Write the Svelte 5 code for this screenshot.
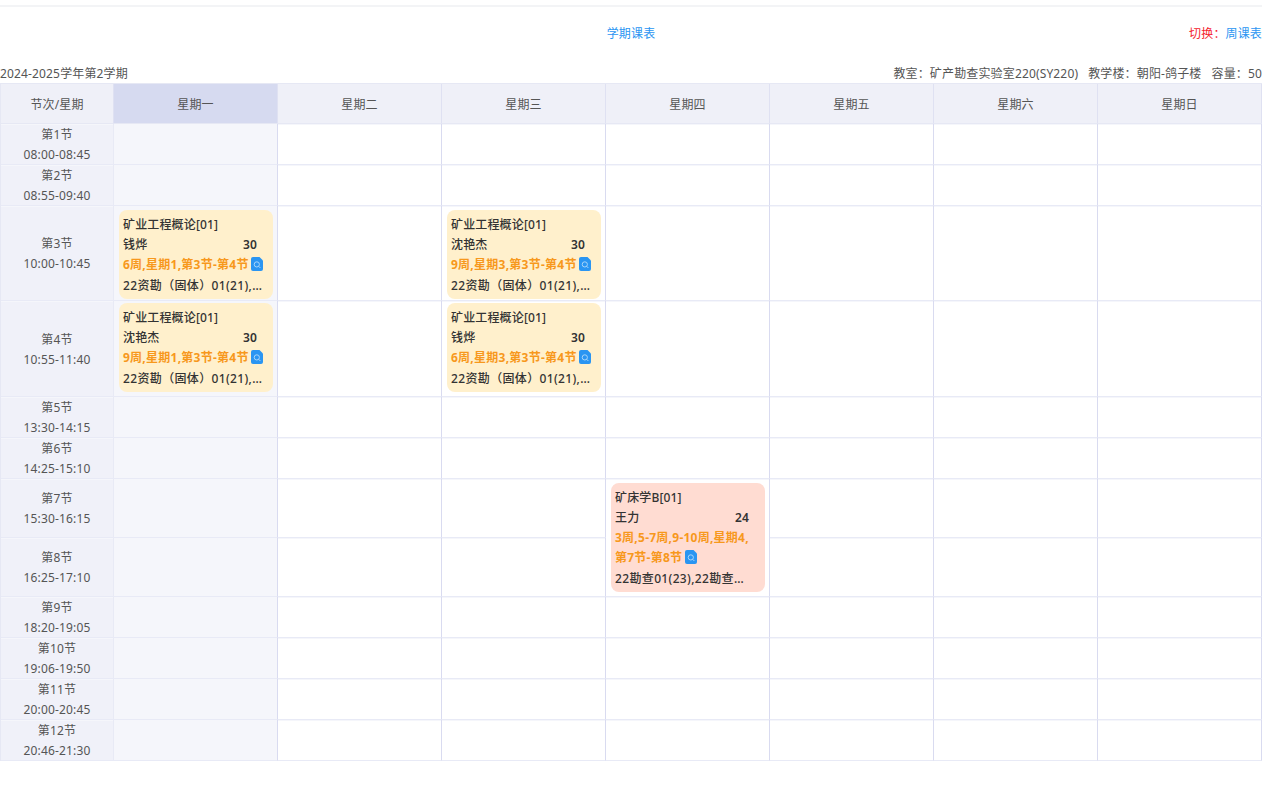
<script>
  const days = ['星期一', '星期二', '星期三', '星期四', '星期五', '星期六', '星期日'];

  const periods = [
    { name: '第1节', time: '08:00-08:45', h: 41 },
    { name: '第2节', time: '08:55-09:40', h: 41 },
    { name: '第3节', time: '10:00-10:45', h: 95 },
    { name: '第4节', time: '10:55-11:40', h: 96 },
    { name: '第5节', time: '13:30-14:15', h: 41 },
    { name: '第6节', time: '14:25-15:10', h: 41 },
    { name: '第7节', time: '15:30-16:15', h: 59 },
    { name: '第8节', time: '16:25-17:10', h: 59 },
    { name: '第9节', time: '18:20-19:05', h: 41 },
    { name: '第10节', time: '19:06-19:50', h: 41 },
    { name: '第11节', time: '20:00-20:45', h: 41 },
    { name: '第12节', time: '20:46-21:30', h: 41 }
  ];

  const classes = '22资勘（固体）01(21),22资勘（固体）02(21)';

  // key is period index + day index
  const cards = {
    '2-0': { title: '矿业工程概论[01]', teacher: '钱烨', count: 30, weeks: '6周,星期1,第3节-第4节', classes },
    '3-0': { title: '矿业工程概论[01]', teacher: '沈艳杰', count: 30, weeks: '9周,星期1,第3节-第4节', classes, tight: true },
    '2-2': { title: '矿业工程概论[01]', teacher: '沈艳杰', count: 30, weeks: '9周,星期3,第3节-第4节', classes },
    '3-2': { title: '矿业工程概论[01]', teacher: '钱烨', count: 30, weeks: '6周,星期3,第3节-第4节', classes, tight: true },
    '6-3': { title: '矿床学B[01]', teacher: '王力', count: 24, weeks: '3周,5-7周,9-10周,星期4,第7节-第8节', classes: '22勘查01(23),22勘查02(23)', span: 2, tone: 'red' }
  };

  // cells covered by a rowspan
  const skipped = ['7-3'];
</script>

<div class="page">
  <div class="topbar">
    <span class="title">学期课表</span>
    <span class="switch"><span class="switch-label">切换：</span><span class="link">周课表</span></span>
  </div>

  <div class="info">
    <span>2024-2025学年第2学期</span>
    <span class="room">
      <span>教室：矿产勘查实验室220(SY220)</span>
      <span>教学楼：朝阳-鸽子楼</span>
      <span>容量：50</span>
    </span>
  </div>

  <table>
    <colgroup>
      <col class="col-first" />
      {#each days as _}
        <col class="col-day" />
      {/each}
    </colgroup>
    <thead>
      <tr>
        <th>节次/星期</th>
        {#each days as day, d}
          <th class:today={d === 0}>{day}</th>
        {/each}
      </tr>
    </thead>
    <tbody>
      {#each periods as period, p}
        <tr style="height: {period.h}px">
          <td class="period">
            <div>{period.name}</div>
            <div>{period.time}</div>
          </td>
          {#each days as _, d}
            {#if !skipped.includes(`${p}-${d}`)}
              {@const card = cards[`${p}-${d}`]}
              <td class="slot" class:today={d === 0} rowspan={card?.span ?? 1}>
                {#if card}
                  <div class="card" class:red={card.tone === 'red'} class:tight={card.tight}>
                    <div class="line">{card.title}</div>
                    <div class="line row"><span>{card.teacher}</span><span class="count">{card.count}</span></div>
                    <div class="weeks">
                      {card.weeks}
                      <svg class="doc" viewBox="0 0 12 14" width="12" height="14">
                        <path d="M2 0H8.5L12 3.5V12a2 2 0 0 1-2 2H2a2 2 0 0 1-2-2V2a2 2 0 0 1 2-2z" fill="#2a95f2" />
                        <circle cx="5.8" cy="7.4" r="2.6" fill="none" stroke="#a9d6fa" stroke-width="1" />
                        <path d="M7.7 9.3l1.7 1.7" stroke="#a9d6fa" stroke-width="1" />
                      </svg>
                    </div>
                    <div class="line clip">{card.classes}</div>
                  </div>
                {/if}
              </td>
            {/if}
          {/each}
        </tr>
      {/each}
    </tbody>
  </table>
</div>

<style>
  :global(body) {
    margin: 0;
    background: #fff;
  }
  .page {
    font-family: 'Noto Sans', 'Noto Sans CJK SC', sans-serif;
    font-size: 12px;
    letter-spacing: 0.15px;
    color: #555;
    padding-top: 5px;
  }
  .topbar {
    position: relative;
    border-top: 2px solid #f3f4f6;
    height: 51px;
    display: flex;
    justify-content: center;
    padding-top: 17px;
    box-sizing: border-box;
    line-height: 20px;
  }
  .title {
    color: #2a95f2;
  }
  .switch {
    position: absolute;
    right: 0;
    top: 17px;
  }
  .switch-label {
    color: #f5222d;
  }
  .link {
    color: #2a95f2;
  }
  .info {
    display: flex;
    justify-content: space-between;
    height: 27px;
    padding-top: 8px;
    box-sizing: border-box;
    line-height: 19px;
  }
  .room {
    display: flex;
    gap: 10px;
  }
  table {
    width: 1262px;
    table-layout: fixed;
    border-collapse: separate;
    border-spacing: 0;
    border-top: 1px solid #e6e8f4;
    border-left: 1px solid #e6e8f4;
    box-sizing: border-box;
  }
  .col-first {
    width: 113px;
  }
  .col-day {
    width: 164px;
  }
  th {
    height: 40px;
    padding: 0;
    font-weight: 400;
    background: #eff0f8;
    border-right: 1px solid #dfe1f2;
    border-bottom: 1px solid #e6e8f4;
    box-sizing: border-box;
  }
  th.today {
    background: #d6daf0;
  }
  td {
    padding: 0;
    box-sizing: border-box;
    border-right: 1px solid #d9dbf0;
    border-bottom: 1px solid #e8eaf6;
    box-shadow: inset 0 1px 0 #f5f6fb;
    vertical-align: top;
  }
  .period {
    background: #f0f1f9;
    text-align: center;
    vertical-align: middle;
    line-height: 19px;
    padding-top: 1px;
    border-right-color: #e8eaf5;
  }
  .period div + div {
    margin-top: 1px;
  }
  .slot.today {
    background: #f5f6fb;
  }
  .card {
    margin: 4px 4px 1px 5px;
    padding: 5px 10px 3px 4px;
    border-radius: 8px;
    background: #fff0cc;
    color: #333;
    font-weight: 500;
    line-height: 20px;
  }
  .card.tight {
    margin-top: 2px;
  }
  .card.red {
    background: #ffdcd2;
  }
  .row {
    display: flex;
    justify-content: space-between;
    padding-right: 6px;
  }
  .count {
    font-weight: 600;
  }
  .weeks {
    color: #f7981c;
    font-weight: 700;
    line-height: 20px;
    letter-spacing: 0.25px;
    padding-bottom: 1px;
  }
  .doc {
    vertical-align: -2px;
    margin-left: -1px;
  }
  .clip {
    white-space: nowrap;
    overflow: hidden;
    text-overflow: ellipsis;
    letter-spacing: 0.35px;
  }
  .red .clip {
    padding-right: 5px;
  }
</style>
